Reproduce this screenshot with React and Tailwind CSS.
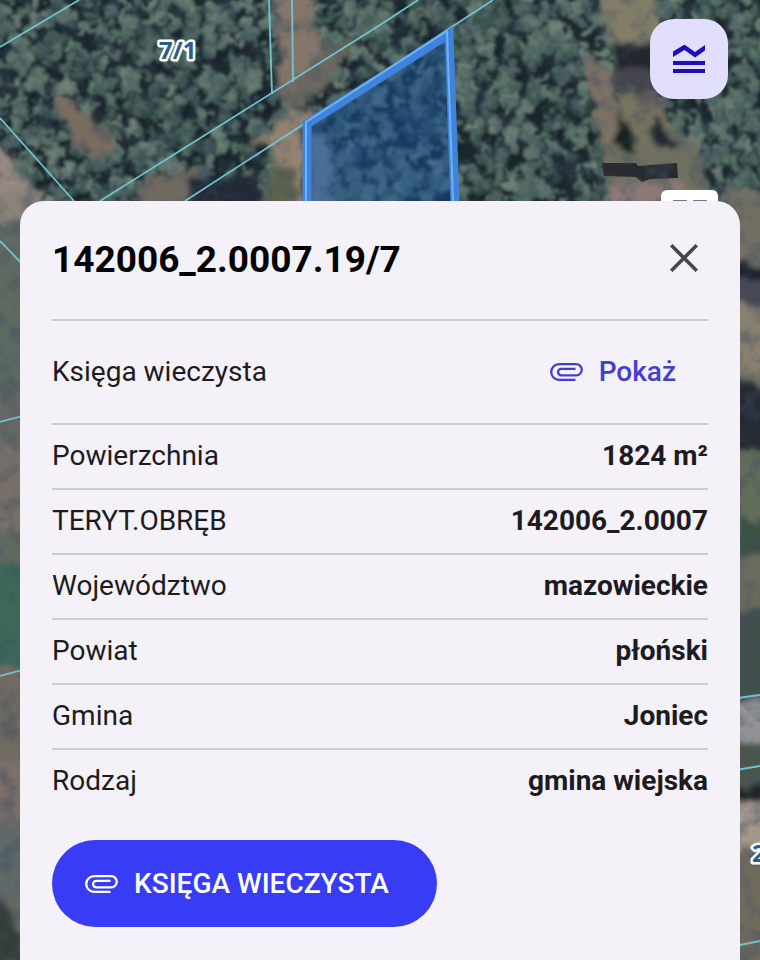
import { useState } from 'react';

const details = [
  { label: 'Powierzchnia', value: '1824 m²' },
  { label: 'TERYT.OBRĘB', value: '142006_2.0007' },
  { label: 'Województwo', value: 'mazowieckie' },
  { label: 'Powiat', value: 'płoński' },
  { label: 'Gmina', value: 'Joniec' },
  { label: 'Rodzaj', value: 'gmina wiejska' },
];

// small seeded generator, so the forest is the same on every render
const makeRandom = (seed) => () => {
  seed = (seed * 1664525 + 1013904223) % 4294967296;
  return seed / 4294967296;
};

const treeColors = ['#465f5b', '#526b64', '#3b5450', '#5c7469', '#304745', '#4b665a', '#65786f'];

const makeTrees = () => {
  const random = makeRandom(77);
  const trees = [];
  for (let y = -6; y < 216; y += 11) {
    for (let x = -6; x < 770; x += 12) {
      if (random() < 0.12) continue;
      trees.push({
        x: Math.round(x + random() * 14),
        y: Math.round(y + random() * 14),
        r: 4 + Math.round(random() * 5),
        color: treeColors[Math.floor(random() * treeColors.length)],
      });
    }
  }
  return trees;
};

const trees = makeTrees();

const PaperclipIcon = () => (
  <svg viewBox="0 0 33 18" className="h-[18px] w-[33px] shrink-0" fill="none" stroke="currentColor" strokeWidth="2.3" aria-hidden="true">
    <path d="M25.5 16.8H9A7.8 7.8 0 0 1 9 1.2h17.2a5.6 5.6 0 0 1 0 11.2H11.3a3.3 3.3 0 0 1 0-6.6h14.2" />
  </svg>
);

const MapBackground = () => (
  <svg
    className="absolute inset-0 h-full w-full"
    viewBox="0 0 760 960"
    preserveAspectRatio="xMidYMin slice"
    aria-hidden="true"
  >
    <defs>
      <filter id="rough" x="-5%" y="-5%" width="110%" height="110%">
        <feTurbulence type="fractalNoise" baseFrequency="0.09" numOctaves="3" seed="4" result="n" />
        <feDisplacementMap in="SourceGraphic" in2="n" scale="22" xChannelSelector="R" yChannelSelector="G" />
        <feGaussianBlur stdDeviation="1.5" />
      </filter>
      <filter id="soft" x="-20%" y="-20%" width="140%" height="140%">
        <feTurbulence type="fractalNoise" baseFrequency="0.08" numOctaves="3" seed="9" result="n" />
        <feDisplacementMap in="SourceGraphic" in2="n" scale="18" xChannelSelector="R" yChannelSelector="G" />
        <feGaussianBlur stdDeviation="2.5" />
      </filter>
      <filter id="grain" x="0" y="0" width="100%" height="100%">
        <feTurbulence type="fractalNoise" baseFrequency="0.055" numOctaves="4" seed="21" />
        <feColorMatrix values="0 0 0 0 0.05  0 0 0 0 0.08  0 0 0 0 0.12  3 0 0 0 -1.35" />
      </filter>
    </defs>

    <rect width="760" height="960" fill="#66695f" />

    {/* forest */}
    <rect width="760" height="216" fill="#1c282e" />
    <g filter="url(#rough)">
      {trees.map((t, i) => (
        <g key={i}>
          <circle cx={t.x + 3} cy={t.y + 4} r={t.r + 1} fill="#18222a" opacity="0.85" />
          <circle cx={t.x} cy={t.y} r={t.r} fill={t.color} />
          <circle cx={t.x - 1} cy={t.y - 2} r={t.r / 2} fill="#83958a" opacity="0.35" />
        </g>
      ))}
    </g>

    {/* dirt roads and clearings */}
    <g filter="url(#soft)">
      <path d="M-8 130L52 220H-8Z" fill="#978982" />
      <path d="M48 88L68 98L108 132L116 152L94 160L72 140Z" fill="#7b6c61" />
      <path d="M274 -10H312L322 50L308 78L278 98Z" fill="#84766a" />
      <path d="M322 50L360 36L340 60L322 92L288 112L282 96Z" fill="#6b675f" />
      <path d="M306 106L318 118L304 130V210H286L272 150L252 140Z" fill="#94836f" />
      <path d="M268 160L296 170V210H262Z" fill="#5c6350" />
      <path d="M145 176L200 168L190 208H140Z" fill="#6f6960" />
      <path d="M192 180L256 174L264 206H188Z" fill="#202c35" />
      <path d="M310 132L328 136L334 210H310Z" fill="#7b8490" />
      <path d="M598 -8H656L660 22L654 44H612Z" fill="#837d68" />
      <path d="M584 58L612 68L618 110L624 165L606 164L594 110Z" fill="#7c7165" />
      <path d="M618 92L660 100L682 146L676 160H618Z" fill="#77735f" />
      <path d="M606 146L694 138L716 210H608Z" fill="#6f7060" />
      <path d="M616 44H670V90L614 88Z" fill="#24272f" />
      <path d="M614 68L660 72L658 90L616 86Z" fill="#45444c" />
      <path d="M632 92L660 88L662 106H638Z" fill="#5f5a5d" />
      <path d="M618 106L634 140V152H617Z" fill="#18211f" />
      <path d="M654 112L674 142L672 150L653 142Z" fill="#1a2325" />
      <path d="M610 182H684L690 208H608Z" fill="#8a7974" />
    </g>
    <path d="M602 163L636 163L638 166L677 163L678 178L650 179L642 182L636 177L604 176Z" fill="#22222c" opacity="0.9" />

    {/* fields left of the panel */}
    <g filter="url(#soft)">
      <rect x="-20" y="190" width="62" height="42" fill="#8b8279" />
      <rect x="-20" y="222" width="62" height="110" fill="#5f6a61" />
      <rect x="-20" y="322" width="62" height="70" fill="#5b6862" />
      <rect x="-20" y="385" width="62" height="65" fill="#656864" />
      <rect x="-20" y="440" width="62" height="100" fill="#776f68" />
      <rect x="-20" y="530" width="62" height="40" fill="#606860" />
      <rect x="-20" y="565" width="62" height="105" fill="#3d6858" />
      <rect x="-20" y="665" width="62" height="100" fill="#706b62" />
      <rect x="-20" y="760" width="62" height="70" fill="#7c7068" />
      <rect x="-20" y="825" width="62" height="75" fill="#606968" />
      <path d="M-5 895L12 915L26 965H-10Z" fill="#343c39" />
    </g>

    {/* yards right of the panel */}
    <g filter="url(#soft)">
      <rect x="726" y="190" width="62" height="75" fill="#727062" />
      <rect x="726" y="263" width="62" height="24" fill="#1f222e" />
      <rect x="726" y="284" width="62" height="20" fill="#474a55" />
      <rect x="726" y="304" width="62" height="70" fill="#8a806f" />
      <path d="M726 374L752 382L788 410V450H726Z" fill="#252c36" />
      <rect x="726" y="455" width="62" height="70" fill="#626d5a" />
      <rect x="738" y="520" width="50" height="35" fill="#3b5143" />
      <rect x="726" y="555" width="62" height="55" fill="#6b6b5d" />
      <rect x="726" y="610" width="62" height="90" fill="#42504c" />
      <rect x="726" y="700" width="62" height="45" fill="#919394" />
      <rect x="726" y="742" width="62" height="46" fill="#4c564c" />
      <rect x="726" y="786" width="62" height="15" fill="#22272b" />
      <rect x="726" y="802" width="62" height="48" fill="#a29789" />
      <rect x="726" y="850" width="62" height="115" fill="#6f6b5c" />
    </g>

    <rect width="760" height="960" filter="url(#grain)" opacity="0.45" />

    {/* parcel borders */}
    <g stroke="#73c8d8" strokeWidth="1.8" fill="none" opacity="0.95">
      <path d="M0 47L79 0" />
      <path d="M0 118L74 201" />
      <path d="M0 241L30 272" />
      <path d="M0 422L30 414" />
      <path d="M0 676L30 668" />
      <path d="M269 0L272 94" />
      <path d="M292 0L293 82" />
      <path d="M100 201L380 25L418 0" />
      <path d="M185 201L307 122L447 30L493 0" />
      <path d="M730 699L760 695" />
      <path d="M730 771L760 766" />
      <path d="M730 947L760 941" />
    </g>

    {/* selected parcel */}
    <path d="M307 124L449 34L456 230H307Z" fill="#1452a0" fillOpacity="0.46" />
    <path d="M307 230V124L449 34L456 230" fill="none" stroke="#3f83dc" strokeWidth="9" />
    <path d="M306 230V122L447 31L454 230" fill="none" stroke="#6db4f0" strokeWidth="2" />

    <g
      fontFamily="'Open Sans', 'Noto Sans', sans-serif"
      fontSize="24"
      fontWeight="700"
      fill="#2d5c86"
      stroke="#ffffff"
      strokeWidth="5"
      strokeLinejoin="round"
      paintOrder="stroke"
    >
      <text x="159" y="59">7/1</text>
      <text x="752" y="862">2</text>
    </g>
  </svg>
);

const MapButtons = () => (
  <>
    <button
      type="button"
      aria-label="Legenda"
      className="absolute top-[19px] right-8 flex h-20 w-[78px] cursor-pointer items-center justify-center rounded-3xl bg-[#e1dffc] text-[#1b0fb9]"
    >
      <svg viewBox="0 0 32 28" className="h-7 w-8" fill="currentColor" aria-hidden="true">
        <path d="M0 6.6L11.5 -.4L22 7L32 0V5.6L22 12.4L11.5 5L0 12Z" />
        <path d="M0 16H32V20H0Z" />
        <path d="M0 24H32V28H0Z" />
      </svg>
    </button>
    <button
      type="button"
      aria-label="Warstwy"
      className="absolute top-[190px] right-[42px] flex h-14 w-[57px] cursor-pointer justify-center gap-[6px] rounded-md bg-white pt-[10px]"
    >
      <span className="h-4 w-[14px] border-t-2 border-[#77777c]" />
      <span className="h-4 w-[14px] border-t-2 border-[#77777c]" />
    </button>
  </>
);

const ParcelPanel = ({ onClose }) => (
  <section className="relative mx-5 mt-[201px] flex-1 rounded-t-3xl bg-[#f4f1f8] px-8 pb-8 text-[28px] text-[#1d1b20]">
    <header className="flex items-start justify-between py-[33px]">
      <h1 className="text-[37px] leading-[52px] font-bold text-black">142006_2.0007.19/7</h1>
      <button
        type="button"
        aria-label="Zamknij"
        onClick={onClose}
        className="flex h-12 w-12 cursor-pointer items-center justify-center text-[#48464c]"
      >
        <svg viewBox="0 0 28 28" className="h-7 w-7" stroke="currentColor" strokeWidth="3.6" aria-hidden="true">
          <path d="M1.2 1.2L26.8 26.8M26.8 1.2L1.2 26.8" />
        </svg>
      </button>
    </header>

    <dl>
      <div className="flex items-center justify-between border-t-2 border-[#cdcbd1] py-9 leading-[30px]">
        <dt>Księga wieczysta</dt>
        <dd className="pr-8">
          <button type="button" className="flex cursor-pointer items-center gap-4 font-medium text-[#4340cf]">
            <PaperclipIcon />
            Pokaż
          </button>
        </dd>
      </div>
      {details.map((item) => (
        <div key={item.label} className="flex items-center justify-between border-t-2 border-[#cdcbd1] pt-[15px] pb-[17px] leading-[31px]">
          <dt>{item.label}</dt>
          <dd className="font-bold">{item.value}</dd>
        </div>
      ))}
    </dl>

    <button
      type="button"
      className="mt-[27px] flex cursor-pointer items-center gap-4 rounded-full bg-[#383cf5] py-7 pr-12 pl-[33px] leading-[31px] font-medium text-white"
    >
      <PaperclipIcon />
      KSIĘGA WIECZYSTA
    </button>
  </section>
);

export default function App() {
  const [isOpen, setIsOpen] = useState(true);

  return (
    <main className="relative flex min-h-screen flex-col overflow-hidden bg-[#66695f] font-['Roboto',sans-serif]">
      <MapBackground />
      <MapButtons />
      {isOpen && <ParcelPanel onClose={() => setIsOpen(false)} />}
    </main>
  );
}
